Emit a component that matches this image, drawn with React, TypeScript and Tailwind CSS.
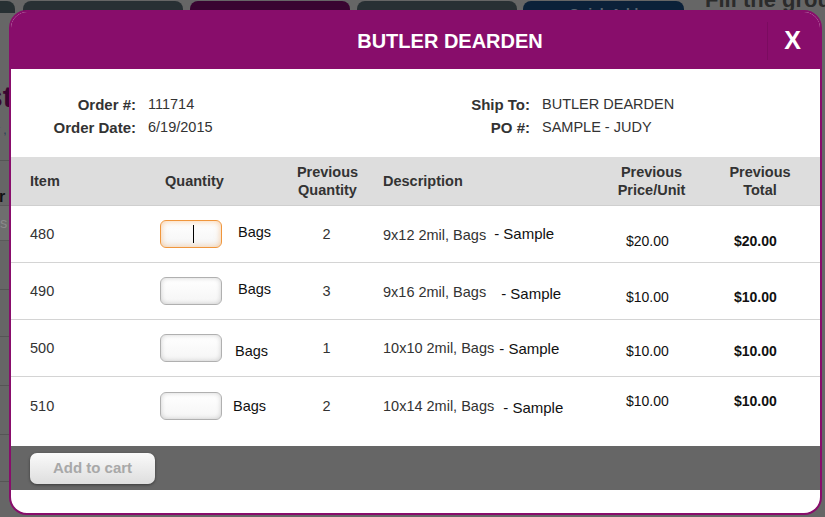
import React from 'react';

type Row = {
    item: string;
    prevQty: string;
    desc: string;
    price: string;
    total: string;
    focused?: boolean;
    bagsGap: string;
    bagsShift: string;
    descShift: string;
    sampleGap: string;
    sampleShift: string;
    priceShift: string;
};

// 上一張訂單的品項
const ROWS: Row[] = [
    {
        item: '480', prevQty: '2', desc: '9x12 2mil, Bags', price: '$20.00', total: '$20.00', focused: true,
        bagsGap: 'ml-[16px]', bagsShift: '-translate-y-[1px]', descShift: 'translate-y-[2px]',
        sampleGap: 'ml-[8px]', sampleShift: 'translate-y-0', priceShift: 'translate-y-[7px]',
    },
    {
        item: '490', prevQty: '3', desc: '9x16 2mil, Bags', price: '$10.00', total: '$10.00',
        bagsGap: 'ml-[16px]', bagsShift: '-translate-y-[1px]', descShift: 'translate-y-[2px]',
        sampleGap: 'ml-[15px]', sampleShift: 'translate-y-[3px]', priceShift: 'translate-y-[6px]',
    },
    {
        item: '500', prevQty: '1', desc: '10x10 2mil, Bags', price: '$10.00', total: '$10.00',
        bagsGap: 'ml-[13px]', bagsShift: 'translate-y-[4px]', descShift: 'translate-y-[1px]',
        sampleGap: 'ml-[5px]', sampleShift: 'translate-y-[1px]', priceShift: 'translate-y-[3px]',
    },
    {
        item: '510', prevQty: '2', desc: '10x14 2mil, Bags', price: '$10.00', total: '$10.00',
        bagsGap: 'ml-[11px]', bagsShift: 'translate-y-[1px]', descShift: 'translate-y-[1px]',
        sampleGap: 'ml-[9px]', sampleShift: 'translate-y-[3px]', priceShift: '-translate-y-[4px]',
    },
];

function QtyInput({ focused }: { focused?: boolean }) {
    return (
        <div
            className={`relative shrink-0 w-[62px] h-[28px] rounded-[6px] border bg-gradient-to-b from-white to-[#f5f5f5] ${focused ? 'border-[#f0963c] shadow-[inset_0_0_6px_rgba(240,150,60,0.5)]' : 'border-[#b0b0b0] shadow-[inset_0_0_5px_rgba(0,0,0,0.18)]'}`}
        >
            {focused && <span className="absolute left-[32px] top-[4px] w-px h-[18px] bg-black" />}
        </div>
    );
}

export default function App() {
    return (
        <div className="relative w-[825px] h-[517px] overflow-hidden bg-[#666666] font-['Liberation_Sans',Arial,sans-serif] text-[14.5px] text-[#333333]">
            {/* 背後頁面（已被遮罩壓暗） */}
            <div className="flex items-start h-[12px] pt-px">
                <div className="shrink-0 w-[15px] h-[12px] bg-[#273033] rounded-tr-[8px]" />
                <div className="shrink-0 ml-[8px] w-[160px] h-[12px] bg-[#283034] rounded-t-[8px]" />
                <div className="shrink-0 ml-[7px] w-[160px] h-[12px] bg-[#390531] rounded-t-[8px]" />
                <div className="shrink-0 ml-[7px] w-[160px] h-[12px] bg-[#283034] rounded-t-[8px]" />
                <div className="shrink-0 ml-[6px] w-[161px] h-[12px] overflow-hidden bg-[#0b2139] rounded-t-[8px] text-center text-[#5a6470] text-[14px] font-bold leading-[26px]">
                    Quick Add
                </div>
                <div className="shrink-0 ml-[21px] -mt-[18px] text-[22px] font-bold text-[#2b2b2b] whitespace-nowrap">Fill the group</div>
            </div>
            <div className="w-[9px] overflow-hidden flex flex-col">
                <div className="mt-[68px] -ml-[14px] text-[30px] font-bold text-[#3a0530] leading-[34px]">st</div>
                <div className="mt-[10px] -ml-[4px] text-[12px] text-[#2a3d55] leading-[12px]">r ,</div>
                <div className="mt-[24px] h-px bg-[#555555]" />
                <div className="mt-[28px] -ml-[10px] text-[16px] font-bold text-[#111111] leading-[16px]">er</div>
                <div className="h-[36px] bg-[#6e6e6e] border-y border-[#5a5a5a] -ml-[8px] text-[#8a8a8a] leading-[34px]">es</div>
                <div className="mt-[48px] h-px bg-[#555555]" />
                <div className="mt-[46px] h-px bg-[#555555]" />
                <div className="mt-[48px] h-px bg-[#555555]" />
                <div className="mt-[48px] h-px bg-[#555555]" />
                <div className="mt-[46px] h-px bg-[#555555]" />
            </div>

            {/* 彈出視窗 */}
            <div className="absolute left-[9px] top-[10px] w-[813px] h-[505px] rounded-[18px] border-2 border-[#880d6b] bg-white overflow-hidden flex flex-col">
                <div className="h-[57px] shrink-0 bg-[#880d6b] flex items-center">
                    <div className="flex-1 pl-[122px] text-center text-white text-[20px] font-bold">BUTLER DEARDEN</div>
                    <div className="w-px h-[38px] bg-[#7b0b60]" />
                    <div className="w-[52px] pr-[3px] text-center text-white text-[25px] font-bold leading-none">X</div>
                </div>

                {/* 訂單資訊 */}
                <div className="h-[88px] shrink-0 pt-[24px] flex leading-[23px]">
                    <div className="w-[125px] text-right font-bold text-[15px]">
                        <div>Order #:</div>
                        <div>Order Date:</div>
                    </div>
                    <div className="ml-[12px] w-[282px]">
                        <div>111714</div>
                        <div>6/19/2015</div>
                    </div>
                    <div className="w-[100px] text-right font-bold text-[15px]">
                        <div>Ship To:</div>
                        <div>PO #:</div>
                    </div>
                    <div className="ml-[12px]">
                        <div>BUTLER DEARDEN</div>
                        <div>SAMPLE - JUDY</div>
                    </div>
                </div>

                {/* 表頭 */}
                <div className="h-[49px] shrink-0 bg-[#dddddd] border-b border-[#cfcfcf] flex items-center font-bold leading-[18px]">
                    <div className="w-[139px] pl-[19px]">Item</div>
                    <div className="w-[135px] pl-[15px]">Quantity</div>
                    <div className="w-[85px] text-center">Previous<br />Quantity</div>
                    <div className="w-[230px] pl-[13px]">Description</div>
                    <div className="w-[105px] text-center pr-[2px]">Previous<br />Price/Unit</div>
                    <div className="w-[115px] text-center pr-[5px]">Previous<br />Total</div>
                </div>

                {/* 品項列 */}
                {ROWS.map((row, idx) => (
                    <div
                        key={row.item}
                        className={`h-[57px] shrink-0 flex items-center ${idx < ROWS.length - 1 ? 'border-b border-[#d4d4d4]' : ''}`}
                    >
                        <div className="w-[139px] pl-[19px] translate-y-px">{row.item}</div>
                        <div className="w-[135px] pl-[10px] flex items-center">
                            <QtyInput focused={row.focused} />
                            <span className={`${row.bagsGap} ${row.bagsShift} text-[#111111]`}>Bags</span>
                        </div>
                        <div className="w-[85px] text-center pr-[2px] translate-y-px">{row.prevQty}</div>
                        <div className="w-[230px] pl-[13px] flex items-center whitespace-nowrap">
                            <span className={row.descShift}>{row.desc}</span>
                            <span className={`${row.sampleGap} ${row.sampleShift} text-[15px] text-[#111111]`}>- Sample</span>
                        </div>
                        <div className={`w-[105px] pl-[26px] text-[14px] text-[#111111] ${row.priceShift}`}>{row.price}</div>
                        <div className={`w-[115px] pl-[29px] text-[14px] font-bold text-[#111111] ${row.priceShift}`}>{row.total}</div>
                    </div>
                ))}
                <div className="h-[12px] shrink-0" />

                {/* 底部 */}
                <div className="h-[44px] shrink-0 bg-[#666666] flex items-center pl-[19px]">
                    <button className="w-[125px] h-[31px] rounded-[7px] bg-gradient-to-b from-[#fafafa] to-[#dedede] shadow-[0_1px_3px_rgba(0,0,0,0.45)] text-[15px] font-bold text-[#a8a8a8]">
                        Add to cart
                    </button>
                </div>
                <div className="flex-1" />
            </div>
        </div>
    );
}
